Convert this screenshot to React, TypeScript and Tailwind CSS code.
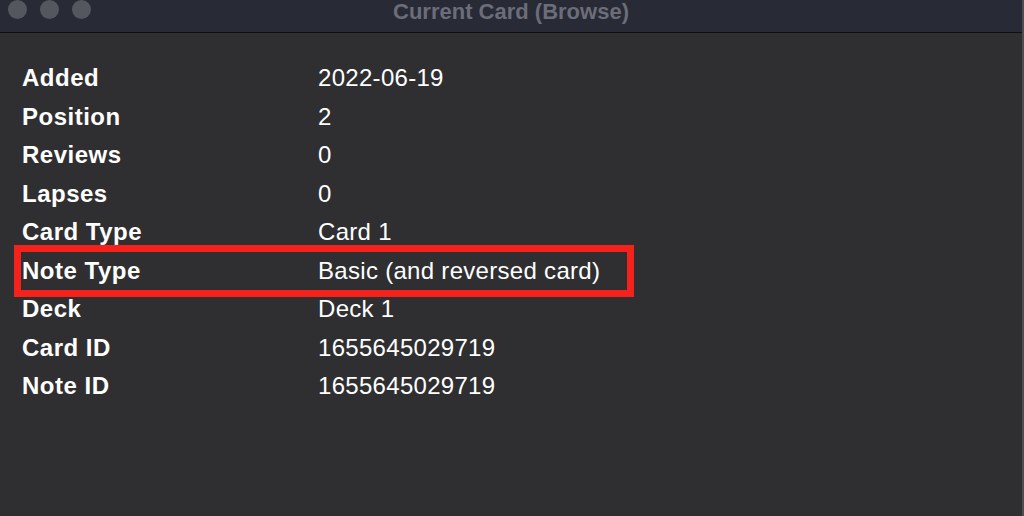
import React from "react";

const rows: [string, string][] = [
  ["Added", "2022-06-19"],
  ["Position", "2"],
  ["Reviews", "0"],
  ["Lapses", "0"],
  ["Card Type", "Card 1"],
  ["Note Type", "Basic (and reversed card)"],
  ["Deck", "Deck 1"],
  ["Card ID", "1655645029719"],
  ["Note ID", "1655645029719"],
];

export default function App() {
  return (
    <div
      className="w-[1024px] h-[516px] overflow-hidden flex flex-col bg-[#2f2f31] border-r-2 border-[#4d4d50]"
      style={{ fontFamily: '"Liberation Sans", Arial, sans-serif' }}
    >
      <div className="h-[32px] shrink-0 bg-[#282a36] relative flex items-start">
        <div className="flex gap-[13px] pl-[8px] pt-0">
          <div className="w-[19px] h-[19px] rounded-full bg-[#55575f]" />
          <div className="w-[19px] h-[19px] rounded-full bg-[#55575f]" />
          <div className="w-[19px] h-[19px] rounded-full bg-[#55575f]" />
        </div>
        <div className="absolute inset-x-0 top-[-1px] text-center text-[22px] leading-[26px] font-bold text-[#6b6d78]">
          Current Card (Browse)
        </div>
      </div>
      <div className="h-[1px] shrink-0 bg-[#0e0e11]" />
      <div className="relative flex-1 pt-[26px] pl-[22px]">
        <div className="grid grid-cols-[296px_1fr] text-white text-[24px] leading-[38.5px]">
          {rows.map(([k, v]) => (
            <React.Fragment key={k}>
              <div className="font-bold tracking-[0.5px]">{k}</div>
              <div className="tracking-[0.3px]">{v}</div>
            </React.Fragment>
          ))}
        </div>
        <div className="absolute left-[14px] top-[212px] w-[620px] h-[52px] border-[7px] border-[#f4221b]" />
      </div>
    </div>
  );
}
